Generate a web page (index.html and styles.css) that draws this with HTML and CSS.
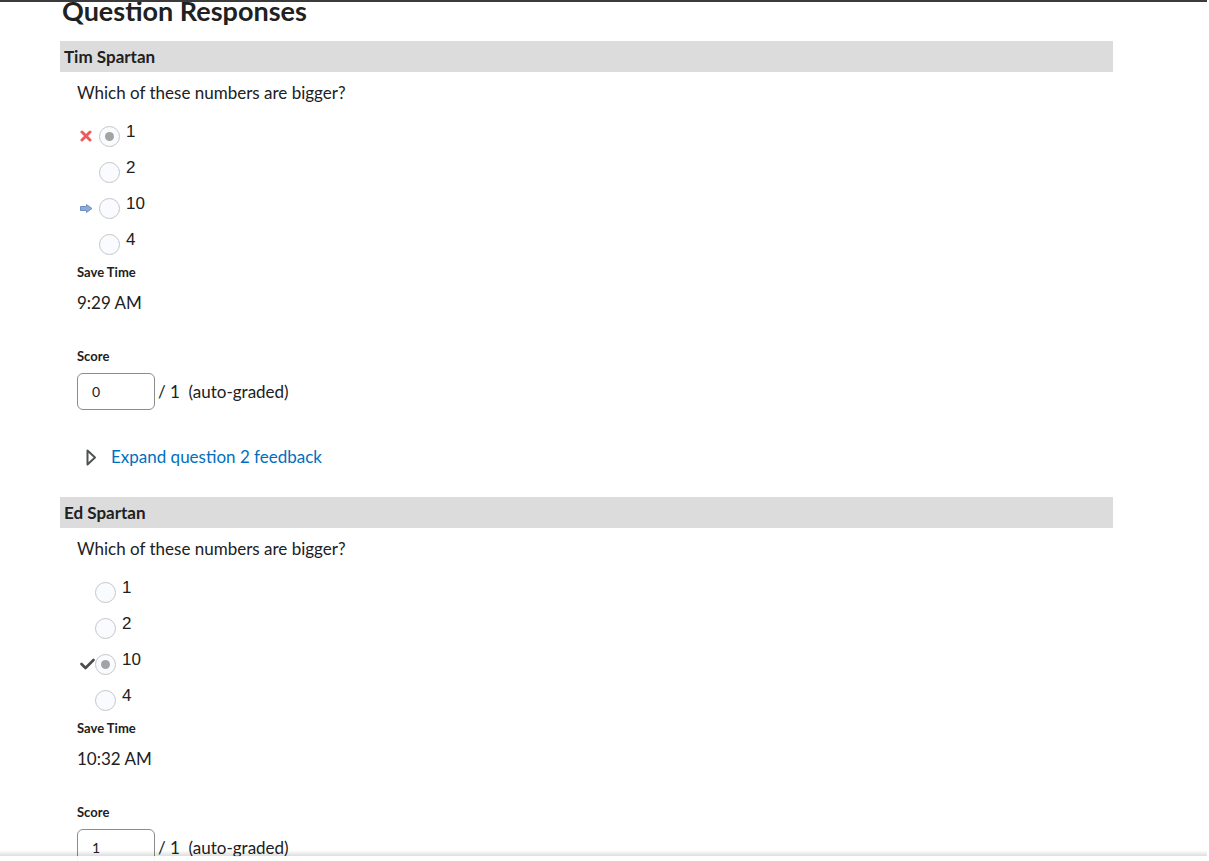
FILE: index.html
```html
<!DOCTYPE html>
<html lang="en">
<head>
    <meta charset="UTF-8">
    <meta name="viewport" content="width=device-width, initial-scale=1.0">
    <title>Question Responses</title>
    <link rel="stylesheet" href="styles.css">
</head>
<body>

    <div class="top-line"></div>

    <div class="page">
        <h1 class="title">Question Responses</h1>

        <!-- Tim Spartan -->
        <div class="response">
            <div class="student">Tim Spartan</div>
            <div class="body">
                <div class="question">Which of these numbers are bigger?</div>
                <div class="choices wide">
                    <div class="choice">
                        <span class="choice-icon">
                            <svg width="12" height="12" viewBox="0 0 12 12"><path d="M2 2 L10 10 M10 2 L2 10" stroke="#f05b5b" stroke-width="3" stroke-linecap="round"/></svg>
                        </span>
                        <span class="radio checked"></span>
                        <span class="choice-label">1</span>
                    </div>
                    <div class="choice">
                        <span class="choice-icon"></span>
                        <span class="radio"></span>
                        <span class="choice-label">2</span>
                    </div>
                    <div class="choice">
                        <span class="choice-icon">
                            <svg width="13" height="9" viewBox="0 0 13 9"><path d="M0.5 2.5 H6.5 V0.5 L12 4.5 L6.5 8.5 V6.5 H0.5 Z" fill="#8eaad8" stroke="#6f8fc2" stroke-width="1" stroke-linejoin="round"/></svg>
                        </span>
                        <span class="radio"></span>
                        <span class="choice-label">10</span>
                    </div>
                    <div class="choice">
                        <span class="choice-icon"></span>
                        <span class="radio"></span>
                        <span class="choice-label">4</span>
                    </div>
                </div>

                <div class="field-label first">Save Time</div>
                <div class="field-value">9:29 AM</div>

                <div class="field-label">Score</div>
                <div class="score-row">
                    <div class="score-box">0</div>
                    <span class="score-text">/ 1&nbsp;&nbsp;(auto-graded)</span>
                </div>

                <div class="expand">
                    <svg width="11" height="17" viewBox="0 0 11 17"><path d="M1.5 1.5 L9 8.5 L1.5 15.5 Z" fill="#fff" stroke="#505354" stroke-width="2" stroke-linejoin="round"/></svg>
                    <a href="#" class="expand-link">Expand question 2 feedback</a>
                </div>
            </div>
        </div>

        <!-- Ed Spartan -->
        <div class="response">
            <div class="student">Ed Spartan</div>
            <div class="body">
                <div class="question">Which of these numbers are bigger?</div>
                <div class="choices narrow">
                    <div class="choice">
                        <span class="choice-icon"></span>
                        <span class="radio"></span>
                        <span class="choice-label">1</span>
                    </div>
                    <div class="choice">
                        <span class="choice-icon"></span>
                        <span class="radio"></span>
                        <span class="choice-label">2</span>
                    </div>
                    <div class="choice">
                        <span class="choice-icon">
                            <svg width="15" height="12" viewBox="0 0 15 12"><path d="M1.5 6 L5.5 10 L13.5 2" fill="none" stroke="#494c4e" stroke-width="2.6" stroke-linecap="round" stroke-linejoin="round"/></svg>
                        </span>
                        <span class="radio checked"></span>
                        <span class="choice-label">10</span>
                    </div>
                    <div class="choice">
                        <span class="choice-icon"></span>
                        <span class="radio"></span>
                        <span class="choice-label">4</span>
                    </div>
                </div>

                <div class="field-label first">Save Time</div>
                <div class="field-value">10:32 AM</div>

                <div class="field-label">Score</div>
                <div class="score-row">
                    <div class="score-box">1</div>
                    <span class="score-text">/ 1&nbsp;&nbsp;(auto-graded)</span>
                </div>

                <div class="expand">
                    <svg width="11" height="17" viewBox="0 0 11 17"><path d="M1.5 1.5 L9 8.5 L1.5 15.5 Z" fill="#fff" stroke="#505354" stroke-width="2" stroke-linejoin="round"/></svg>
                    <a href="#" class="expand-link">Expand question 2 feedback</a>
                </div>
            </div>
        </div>
    </div>

    <div class="bottom-shadow"></div>
    <div class="bottom-fade"></div>

</body>
</html>
```

FILE: styles.css
```css
body {
    margin: 0;
    font-family: Lato, "Open Sans", sans-serif;
    color: #202122;
    background-color: #ffffff;
    overflow: hidden;
}

.top-line {
    position: fixed;
    top: 0;
    left: 0;
    width: 1207px;
    height: 2px;
    background-color: #3b3b3b;
}

.page {
    width: 1053px;
    padding-left: 60px;
}

.title {
    margin: -5px 0 14px 2px;
    font-size: 27px;
    font-weight: 700;
    line-height: 32px;
}

.student {
    background-color: #dcdcdc;
    height: 31px;
    line-height: 31px;
    padding-left: 4px;
    font-size: 17px;
    font-weight: 700;
}

.body {
    padding-left: 17px;
    padding-bottom: 30px;
}

.question {
    margin-top: 11px;
    font-size: 17px;
    line-height: 20px;
}

.choices {
    margin-top: 15px;
}

.choice {
    display: flex;
    align-items: center;
    height: 36px;
}

.choice-icon {
    display: flex;
    align-items: center;
    padding-left: 3px;
    box-sizing: border-box;
}

.choices.wide .choice-icon {
    width: 22px;
}

.choices.narrow .choice-icon {
    width: 18px;
}

.radio {
    width: 19px;
    height: 19px;
    border: 1px solid #c6c6c6;
    border-radius: 50%;
    background-color: #f9fbff;
    display: flex;
    align-items: center;
    justify-content: center;
}

.radio.checked::after {
    content: "";
    width: 9px;
    height: 9px;
    border-radius: 50%;
    background-color: #a3a3a3;
}

.choice-label {
    align-self: flex-start;
    margin-top: 4px;
    margin-left: 6px;
    font-family: "Liberation Sans", Arial, sans-serif;
    font-size: 17px;
    line-height: 20px;
}

.field-label {
    margin-top: 35px;
    font-size: 13px;
    font-weight: 700;
    line-height: 16px;
}

.field-label.first {
    margin-top: 2px;
}

.field-value {
    margin-top: 13px;
    font-size: 17px;
    line-height: 20px;
}

.score-row {
    display: flex;
    align-items: center;
    margin-top: 9px;
}

.score-box {
    width: 78px;
    height: 37px;
    box-sizing: border-box;
    border: 1px solid #8c8c8c;
    border-radius: 6px;
    padding-left: 14px;
    font-size: 14px;
    line-height: 35px;
}

.score-text {
    margin-left: 3px;
    font-size: 17px;
    line-height: 20px;
}

.expand {
    display: flex;
    align-items: center;
    margin-top: 37px;
    padding-left: 9px;
    height: 20px;
}

.expand svg {
    margin-right: 14px;
}

.expand-link {
    color: #006fbf;
    text-decoration: none;
    font-size: 17px;
    line-height: 20px;
}

.bottom-shadow {
    position: fixed;
    left: 0;
    bottom: 5px;
    width: 1207px;
    height: 5px;
    background: linear-gradient(rgba(0, 0, 0, 0.02), rgba(0, 0, 0, 0.13));
}

.bottom-fade {
    position: fixed;
    left: 0;
    bottom: 0;
    width: 1207px;
    height: 5px;
    background-color: rgba(255, 255, 255, 0.92);
}
```
